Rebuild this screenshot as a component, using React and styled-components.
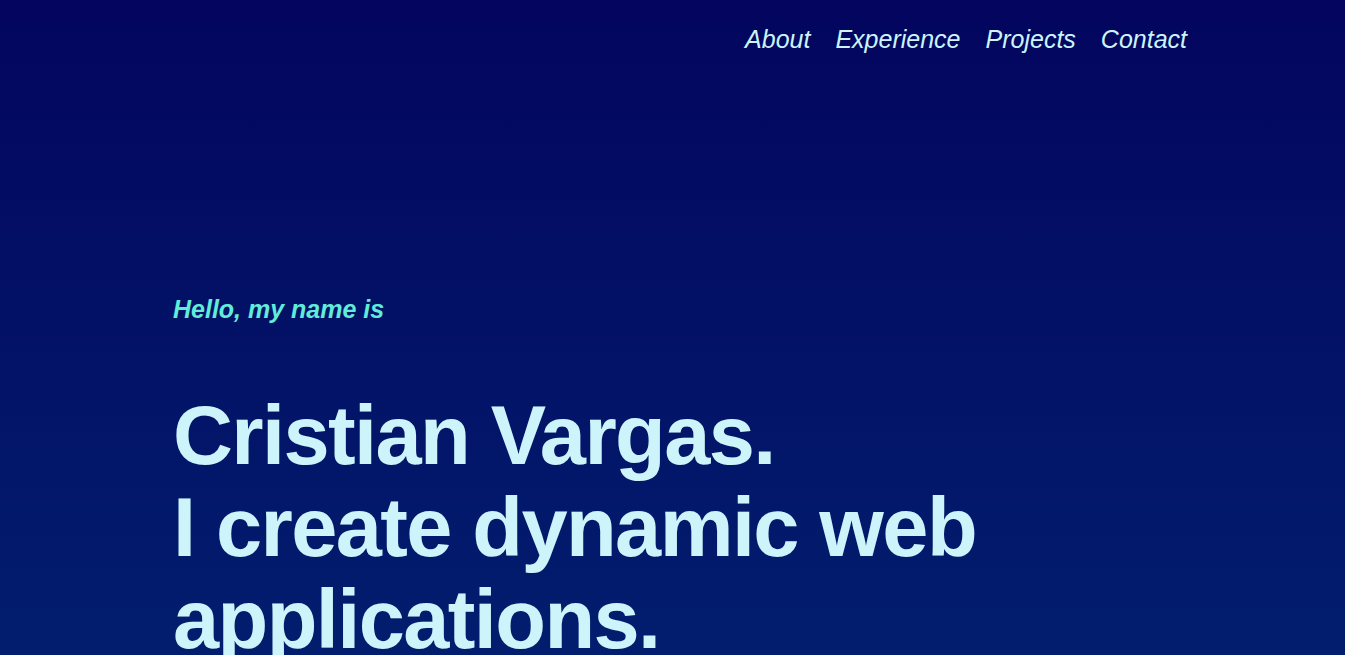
import React from "react";
import styled, { createGlobalStyle } from "styled-components";

const Global = createGlobalStyle`
  html, body { margin: 0; padding: 0; }
  body {
    font-family: "Liberation Sans", Arial, sans-serif;
    background: #03065f;
  }
`;

const Page = styled.div`
  min-height: 655px;
  background: linear-gradient(180deg, #03055e 0%, #021e6f 100%);
  display: flex;
  flex-direction: column;
`;

const Nav = styled.nav`
  display: flex;
  justify-content: flex-end;
  gap: 25px;
  padding: 25px 158px 0 0;
`;

const NavLink = styled.a`
  font-family: "Liberation Sans", Arial, sans-serif;
  font-style: italic;
  font-size: 25px;
  color: #ccf4fa;
  text-decoration: none;
  line-height: normal;
`;

const Hero = styled.section`
  display: flex;
  flex-direction: column;
  padding: 241px 0 0 173px;
`;

const Greeting = styled.p`
  margin: 0;
  font-family: "Liberation Sans", Arial, sans-serif;
  font-style: italic;
  font-weight: 700;
  font-size: 25px;
  line-height: normal;
  color: #60ecd8;
`;

const Title = styled.h1`
  margin: 66px 0 0 0;
  font-family: "Liberation Sans", Arial, sans-serif;
  font-weight: 700;
  font-size: 83px;
  line-height: 92px;
  letter-spacing: -1.6px;
  color: #ccf4fa;
  max-width: 880px;
`;

export default function App() {
  return (
    <>
      <Global />
      <Page>
        <Nav>
          <NavLink href="#about">About</NavLink>
          <NavLink href="#experience">Experience</NavLink>
          <NavLink href="#projects">Projects</NavLink>
          <NavLink href="#contact">Contact</NavLink>
        </Nav>
        <Hero>
          <Greeting>Hello, my name is</Greeting>
          <Title>
            Cristian Vargas.
            <br />I create dynamic web applications.
          </Title>
        </Hero>
      </Page>
    </>
  );
}
